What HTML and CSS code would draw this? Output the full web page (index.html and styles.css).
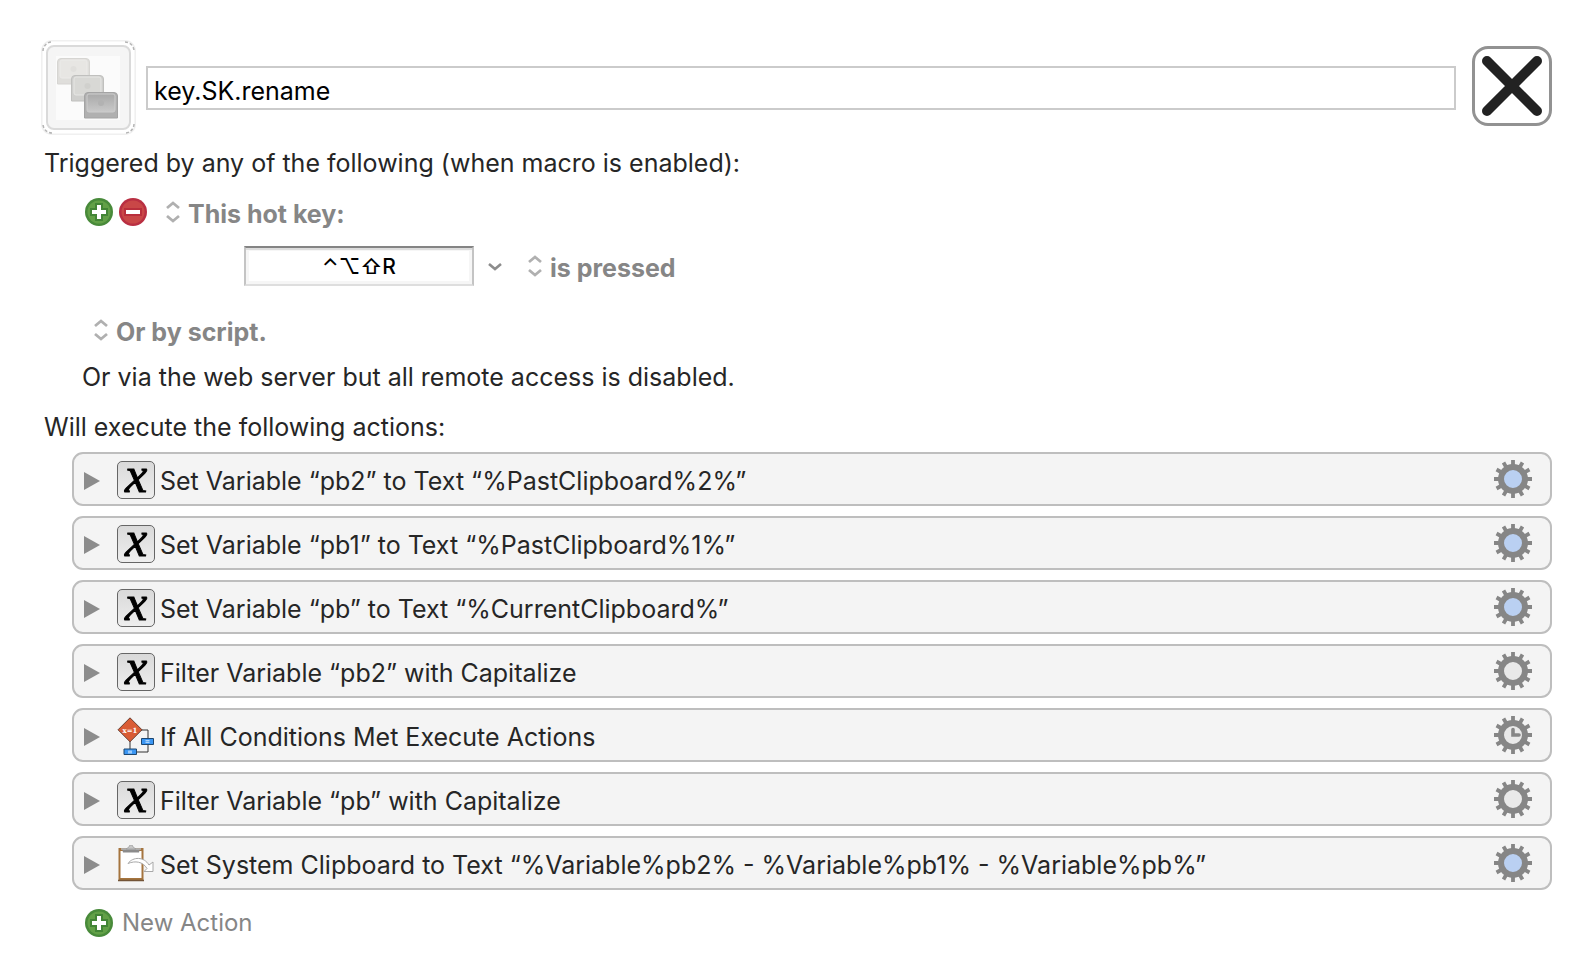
FILE: index.html
```html
<!DOCTYPE html>
<html lang="en">
<head>
<meta charset="utf-8">
<title>Macro Editor</title>
<link rel="stylesheet" href="styles.css">
</head>
<body>
<svg class="defs" aria-hidden="true">
  <defs>
    <linearGradient id="key-dark" x1="0" y1="0" x2="0" y2="1"><stop offset="0" stop-color="#a9a9a9"/><stop offset="1" stop-color="#c9c9c9"/></linearGradient>
  </defs>
  <symbol id="plus" viewBox="0 0 28 28">
    <circle cx="14" cy="14" r="14" fill="#488a3a"/>
    <circle cx="14" cy="14" r="11.5" fill="#62a047"/>
    <path d="M10 5h8v5h5v8h-5v5h-8v-5H5v-8h5z" fill="#438536"/>
    <path d="M12 7h4v5h5v4h-5v5h-4v-5H7v-4h5z" fill="#fff"/>
  </symbol>
  <symbol id="minus" viewBox="0 0 28 28">
    <circle cx="14" cy="14" r="14" fill="#b92f42"/>
    <circle cx="14" cy="14" r="11.5" fill="#c94747"/>
    <path d="M5 10h18v8H5z" fill="#b92f3c"/>
    <path d="M7 12h14v4H7z" fill="#fff"/>
  </symbol>
  <symbol id="updown" viewBox="0 0 14 22">
    <path d="M1 7l6-5 6 5M1 15l6 5 6-5" fill="none" stroke="#b0b0b0" stroke-width="2.800"/>
  </symbol>
  <symbol id="gear" viewBox="0 0 38 38">
    <g stroke="#868686" stroke-width="3.8">
      <path d="M19 0v9M19 29v9M0 19h9M29 19h9"/>
      <path d="M19 0v9M19 29v9M0 19h9M29 19h9" transform="rotate(30 19 19)"/>
      <path d="M19 0v9M19 29v9M0 19h9M29 19h9" transform="rotate(60 19 19)"/>
    </g>
    <circle cx="19" cy="19" r="12" fill="currentColor" stroke="#868686" stroke-width="6"/>
  </symbol>
  <symbol id="clock" viewBox="0 0 38 38">
    <path d="M19 13.500v5.500h6" fill="none" stroke="#868686" stroke-width="3.600" stroke-linecap="round"/>
  </symbol>
  <symbol id="clipboard" viewBox="0 0 38 38">
    <path d="M1.500 3h25v33h-25z" fill="#a5743e"/>
    <path d="M1 35.500h26" stroke="#735437" stroke-width="1.500"/>
    <path d="M3.500 6h21v27h-21z" fill="#fff"/>
    <path d="M5 3.500h18l-1 4H6z" fill="#8b8b8b"/>
    <path d="M4 4h20" stroke="#b8b8b8" stroke-width="1.500"/>
    <path d="M9 4l3-2a2 2 0 1 1 4 0l3 2z" fill="#c7c7c7" stroke="#999" stroke-width=".7"/>
    <path d="M11 18.500c5-7 16-7 21 1.500l4-3v9.500h-9l3-3c-4-7-12-8-19-5z" fill="#fff" stroke="#a8a8a8" stroke-width="1"/>
  </symbol>
</svg>

<main class="editor">
  <header class="header">
    <button class="macro-icon" type="button" aria-label="Macro icon">
      <svg viewBox="0 0 95 95" aria-hidden="true">
        <rect x=".8" y=".8" width="93.400" height="93.400" rx="10" fill="#fff" stroke="#f0f0f0" stroke-width="1.600"/>
        <path d="M2 11a9 9 0 0 1 9-9M84 2a9 9 0 0 1 9 9M93 84a9 9 0 0 1-9 9M11 93a9 9 0 0 1-9-9" fill="none" stroke="#b4b4b4" stroke-width="1.500" stroke-dasharray="3 2"/>
        <rect x="6" y="6" width="83" height="83" rx="7" fill="#f5f5f5" stroke="#dadada" stroke-width="2"/>
        <rect x="15" y="16" width="64" height="64" fill="#fbfbfb"/>
        <g fill="#dfdedb" stroke="#d6d5d2">
          <path d="M16.500 44V22q0-3.500 3.500-3.500h25q3.500 0 3.500 3.500V44z"/>
          <rect x="19" y="20" width="27" height="18" rx="2" fill="#e7e6e3" stroke="#ecebe9"/>
          <circle cx="32.500" cy="29" r="3" fill="#e0dfdc" stroke="none"/>
        </g>
        <g fill="#cfcfcd" stroke="#c0c0be">
          <path d="M30.500 61V39q0-3.500 3.500-3.500h25q3.500 0 3.500 3.500V61z"/>
          <rect x="33" y="37" width="27" height="18" rx="2" fill="#d8d8d5" stroke="#e6e6e4"/>
          <circle cx="46.500" cy="46" r="3" fill="#d0d0cd" stroke="none"/>
        </g>
        <g fill="#b0b0b0" stroke="#a4a4a4">
          <path d="M43.500 78V56q0-3.500 3.500-3.500h26q3.500 0 3.500 3.500V78z"/>
          <rect x="46" y="54" width="28" height="18" rx="2" fill="url(#key-dark)" stroke="#cdcdcd"/>
          <circle cx="60" cy="63" r="3" fill="#b2b2b2" stroke="none"/>
        </g>
      </svg>
    </button>
    <input class="macro-name" type="text" value="key.SK.rename" aria-label="Macro name">
    <button class="close" type="button" aria-label="Close">
      <svg viewBox="0 0 60 60" aria-hidden="true"><path d="M5 5l50 50M55 5L5 55" stroke="#222" stroke-width="10" stroke-linecap="round"/></svg>
    </button>
  </header>

  <section class="triggers">
    <h2 class="heading">Triggered by any of the following (when macro is enabled):</h2>
    <div class="trigger">
      <button class="round" type="button" aria-label="Add trigger"><svg aria-hidden="true"><use href="#plus"/></svg></button>
      <button class="round" type="button" aria-label="Remove trigger"><svg aria-hidden="true"><use href="#minus"/></svg></button>
      <label class="popup popup-type"><svg class="arrows" aria-hidden="true"><use href="#updown"/></svg><select aria-label="Trigger type"><option>This hot key:</option></select></label>
    </div>
    <div class="hotkey">
      <input class="hotkey-field" type="text" value="⌃⌥⇧R" aria-label="Hot key">
      <button class="history" type="button" aria-label="Special keys"><svg viewBox="0 0 14 8" aria-hidden="true"><path d="M1 1l6 5 6-5" fill="none" stroke="#8c8c8c" stroke-width="2.600"/></svg></button>
      <label class="popup"><svg class="arrows" aria-hidden="true"><use href="#updown"/></svg><select aria-label="Hot key mode"><option>is pressed</option></select></label>
    </div>
    <div class="script">
      <label class="popup"><svg class="arrows" aria-hidden="true"><use href="#updown"/></svg><select aria-label="Script trigger"><option>Or by script.</option></select></label>
    </div>
    <p class="remote">Or via the web server but all remote access is disabled.</p>
  </section>

  <section class="actions">
    <h2 class="heading">Will execute the following actions:</h2>
    <ul class="list">
      <li class="action"><button class="disclose" type="button" aria-label="Expand"></button><span class="icon variable" aria-hidden="true">x</span><span class="title">Set Variable “pb2” to Text “%PastClipboard%2%”</span><button class="gear blue" type="button" aria-label="Options"><svg aria-hidden="true"><use href="#gear"/></svg></button></li>
      <li class="action"><button class="disclose" type="button" aria-label="Expand"></button><span class="icon variable" aria-hidden="true">x</span><span class="title">Set Variable “pb1” to Text “%PastClipboard%1%”</span><button class="gear blue" type="button" aria-label="Options"><svg aria-hidden="true"><use href="#gear"/></svg></button></li>
      <li class="action"><button class="disclose" type="button" aria-label="Expand"></button><span class="icon variable" aria-hidden="true">x</span><span class="title">Set Variable “pb” to Text “%CurrentClipboard%”</span><button class="gear blue" type="button" aria-label="Options"><svg aria-hidden="true"><use href="#gear"/></svg></button></li>
      <li class="action"><button class="disclose" type="button" aria-label="Expand"></button><span class="icon variable" aria-hidden="true">x</span><span class="title">Filter Variable “pb2” with Capitalize</span><button class="gear" type="button" aria-label="Options"><svg aria-hidden="true"><use href="#gear"/></svg></button></li>
      <li class="action"><button class="disclose" type="button" aria-label="Expand"></button><svg class="icon" viewBox="0 0 38 38" aria-hidden="true">
        <path d="M24 13h7v22H19M13 24v8" fill="none" stroke="#333"/>
        <path d="M13 .8L25 12.800 13 24.800 1 12.800z" fill="#d95c35" stroke="#4a2a1e" stroke-width=".8"/>
        <text class="equation" x="13" y="15.500" text-anchor="middle">x=1</text>
        <path d="M24.500 21.500h12v6h-12zM7 32h12.500v5.500H7z" fill="#3b96f3" stroke="#1d466f"/>
        <path d="M28.500 23.700h4M28.500 25.300h4M11 34.200h4M11 35.800h4" stroke="#d4eaff" stroke-width=".9"/>
      </svg><span class="title">If All Conditions Met Execute Actions</span><button class="gear" type="button" aria-label="Options"><svg aria-hidden="true"><use href="#gear"/><use href="#clock"/></svg></button></li>
      <li class="action"><button class="disclose" type="button" aria-label="Expand"></button><span class="icon variable" aria-hidden="true">x</span><span class="title">Filter Variable “pb” with Capitalize</span><button class="gear" type="button" aria-label="Options"><svg aria-hidden="true"><use href="#gear"/></svg></button></li>
      <li class="action"><button class="disclose" type="button" aria-label="Expand"></button><svg class="icon" aria-hidden="true"><use href="#clipboard"/></svg><span class="title">Set System Clipboard to Text “%Variable%pb2% - %Variable%pb1% - %Variable%pb%”</span><button class="gear blue" type="button" aria-label="Options"><svg aria-hidden="true"><use href="#gear"/></svg></button></li>
    </ul>
    <button class="new-action" type="button"><svg aria-hidden="true"><use href="#plus"/></svg>New Action</button>
  </section>
</main>
</body>
</html>
```
FILE: styles.css
```css
* { box-sizing: border-box; }

body {
  margin: 0;
  background: #fff;
  color: #262626;
  font: 25px/32px Inter, "Liberation Sans", sans-serif;
}

button, input, select { font: inherit; margin: 0; }
button { padding: 0; border: 0; background: none; color: inherit; }
svg { display: block; }
h2, p, ul { margin: 0; padding: 0; font-size: inherit; font-weight: 400; }

.defs { position: absolute; width: 0; height: 0; }

.editor { padding: 40px 40px 0 41px; }

.header { display: flex; align-items: flex-start; gap: 10px; }
.macro-icon { width: 95px; height: 95px; flex: none; }
.macro-name {
  flex: 1;
  min-width: 0;
  height: 44px;
  margin-top: 26px;
  padding: 6px 6px 0;
  border: 2px solid #cbcbcb;
  border-radius: 0;
  background: #fff;
  color: #000;
}
.close {
  display: grid;
  place-items: center;
  flex: none;
  width: 80px;
  height: 80px;
  margin: 6px 0 0 6px;
  border: 3px solid #929292;
  border-radius: 16px;
}
.close svg { width: 60px; height: 60px; }

.heading { padding-left: 3px; }
.triggers { padding-top: 12px; }

.trigger { display: flex; align-items: center; gap: 6px; margin: 17px 0 0 44px; }
.round, .round svg { width: 28px; height: 28px; }

.popup { display: flex; align-items: center; gap: 8px; color: #868686; font-weight: 700; }
.popup-type { margin-left: 13px; }
.popup select {
  appearance: none;
  padding: 2px 0 0;
  border: 0;
  background: none;
  color: inherit;
  height: 32px;
}
.arrows { width: 14px; height: 22px; }

.hotkey { display: flex; align-items: center; margin: 18px 0 0 203px; }
.hotkey-field {
  width: 230px;
  height: 40px;
  padding: 0;
  border: 2px solid #c4c4c4;
  border-top-color: #848484;
  border-bottom-color: #dedede;
  box-shadow: inset 0 2px #dcdcdc, inset 0 0 0 3px #f6f6f6;
  background: #fff;
  color: #000;
  font-size: 21px;
  font-weight: 500;
  text-align: center;
}
.history { width: 14px; margin: 2px 26px 0 14px; }

.script { margin: 28px 0 0 53px; }
.remote { margin: 15px 0 0 41px; }

.actions { padding-top: 18px; }
.list { display: grid; gap: 10px; margin: 9px 0 0 31px; list-style: none; }
.action {
  display: flex;
  align-items: center;
  min-height: 54px;
  padding: 0 18px 0 10px;
  border: 2px solid #bebebe;
  border-radius: 11px;
  background: #f4f4f4;
}
.disclose {
  width: 16px;
  height: 18px;
  margin: 4px 17px 0 0;
  background: #8c8c8c;
  clip-path: polygon(0 0, 100% 50%, 0 100%);
}
.icon { width: 38px; height: 38px; margin: 2px 5px 0 0; }
.variable {
  border: 1px solid #666;
  border-radius: 5px;
  background: linear-gradient(#d9d9d9, #eee);
  color: #000;
  font: italic 50px/26px "Liberation Serif", serif;
  -webkit-text-stroke: 1px #000;
  text-align: center;
}
.title { flex: 1; padding-top: 4px; }
.gear, .gear svg { width: 38px; height: 38px; }
.gear { color: #e9e9e9; }
.blue { color: #bad0f2; }

.equation { font: bold 7px "DejaVu Serif", serif; fill: #fff; }

.new-action {
  display: flex;
  align-items: center;
  gap: 9px;
  margin: 17px 0 16px 44px;
  color: #868686;
  font-size: 24px;
}
.new-action svg { width: 28px; height: 28px; }
```
